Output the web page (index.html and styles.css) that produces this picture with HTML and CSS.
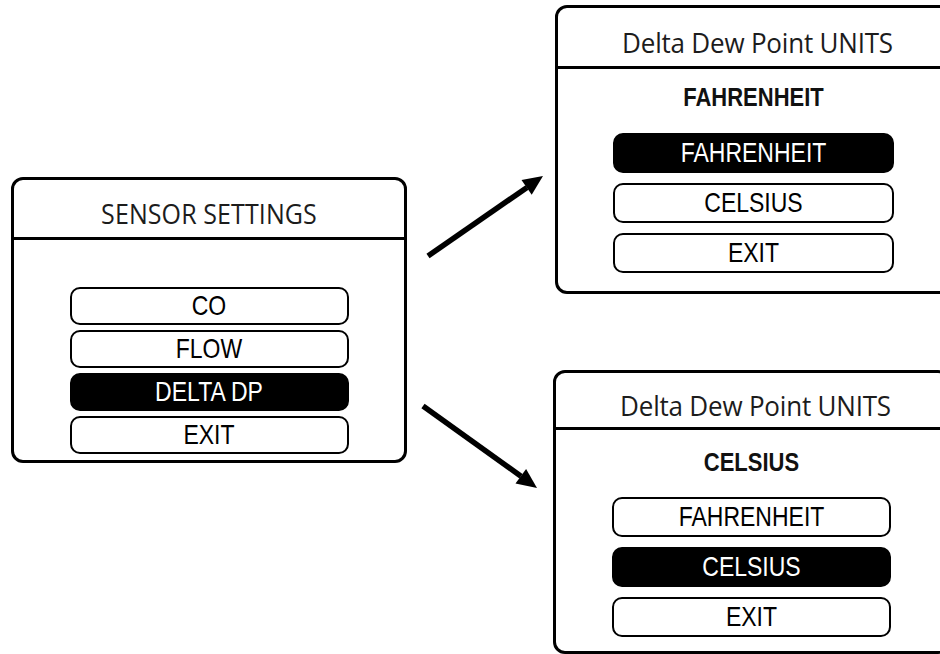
FILE: index.html
```html
<!DOCTYPE html>
<html>
<head>
<meta charset="utf-8">
<link rel="stylesheet" href="styles.css">
</head>
<body>
<div class="stage">
  <div class="col-left">
    <section class="panel panel-main">
      <header class="panel-head"><span class="txt">SENSOR SETTINGS</span></header>
      <div class="panel-body">
        <div class="btn"><span class="txt">CO</span></div>
        <div class="btn"><span class="txt">FLOW</span></div>
        <div class="btn btn-on"><span class="txt">DELTA DP</span></div>
        <div class="btn"><span class="txt">EXIT</span></div>
      </div>
    </section>
  </div>
  <div class="col-right">
    <section class="panel panel-f">
      <header class="panel-head"><span class="txt">Delta Dew Point UNITS</span></header>
      <div class="panel-body">
        <div class="value"><span class="txt">FAHRENHEIT</span></div>
        <div class="btn btn-on"><span class="txt">FAHRENHEIT</span></div>
        <div class="btn"><span class="txt">CELSIUS</span></div>
        <div class="btn"><span class="txt">EXIT</span></div>
      </div>
    </section>
    <section class="panel panel-c">
      <header class="panel-head"><span class="txt">Delta Dew Point UNITS</span></header>
      <div class="panel-body">
        <div class="value"><span class="txt">CELSIUS</span></div>
        <div class="btn"><span class="txt">FAHRENHEIT</span></div>
        <div class="btn btn-on"><span class="txt">CELSIUS</span></div>
        <div class="btn"><span class="txt">EXIT</span></div>
      </div>
    </section>
  </div>
  <svg class="arrows" width="940" height="654" viewBox="0 0 940 654">
    <line x1="428" y1="256" x2="527" y2="187.4" stroke="#000" stroke-width="5.5"/>
    <polygon points="543,176 531.7,194.8 521.5,180" fill="#000"/>
    <line x1="423" y1="406" x2="521" y2="476.3" stroke="#000" stroke-width="5.5"/>
    <polygon points="537,488 515.5,483.6 526.1,469" fill="#000"/>
  </svg>
</div>
</body>
</html>
```
FILE: styles.css
```css
html, body {
  margin: 0;
  padding: 0;
  background: #fff;
}
.stage {
  position: relative;
  width: 940px;
  height: 654px;
  overflow: hidden;
  display: flex;
  align-items: flex-start;
  padding-left: 11px;
  box-sizing: border-box;
}
.col-left {
  padding-top: 177px;
  flex: none;
}
.col-right {
  flex: none;
  margin-left: 146px;
  padding-top: 5px;
  display: flex;
  flex-direction: column;
  gap: 76px;
}
.panel {
  box-sizing: border-box;
  width: 397px;
  border: 3px solid #000;
  border-radius: 12px;
  background: #fff;
  display: flex;
  flex-direction: column;
}
.panel-main { width: 396px; }
.panel-f { margin-left: 2px; }
.txt {
  display: inline-block;
  white-space: nowrap;
}
.panel-head {
  box-sizing: border-box;
  border-bottom: 3px solid #000;
  display: flex;
  align-items: center;
  justify-content: center;
  font-family: "Open Sans", "Noto Sans", sans-serif;
  font-size: 25px;
  color: #1c1c1c;
  letter-spacing: -0.1px;
}
.panel-head .txt { transform: scaleY(1.07); }
.panel-main .panel-head { height: 60px; padding-top: 8px; letter-spacing: 0.1px; }
.panel-f .panel-head,
.panel-c .panel-head { font-size: 26px; letter-spacing: -0.2px; padding-left: 8px; }
.panel-f .panel-head { height: 61px; padding-top: 9px; }
.panel-c .panel-head { height: 57px; padding-top: 9px; }
.panel-body {
  display: flex;
  flex-direction: column;
  align-items: center;
}
.panel-main .panel-body { padding: 47px 0 6px; gap: 5px; }
.panel-f .panel-body { padding: 16px 0 18px; gap: 10px; }
.panel-c .panel-body { padding: 20px 0 14px; gap: 10px; }
.value {
  font-family: "Liberation Sans", Arial, sans-serif;
  font-weight: bold;
  font-size: 22px;
  line-height: 26px;
  height: 26px;
  color: #111;
}
.value .txt { transform: scaleY(1.16); }
.panel-f .value { margin-bottom: 12px; }
.panel-c .value { margin-bottom: 11px; }
.btn {
  box-sizing: border-box;
  width: 281px;
  height: 40px;
  border: 2px solid #000;
  border-radius: 10px;
  display: flex;
  align-items: center;
  justify-content: center;
  font-family: "Liberation Sans", Arial, sans-serif;
  font-size: 23px;
  color: #000;
  background: #fff;
}
.btn .txt { transform: scaleY(1.18); }
.panel-main .btn { width: 279px; height: 38px; }
.panel-c .btn { width: 279px; }
.btn-on {
  background: #000;
  color: #fff;
}
.arrows {
  position: absolute;
  left: 0;
  top: 0;
  pointer-events: none;
}
```
